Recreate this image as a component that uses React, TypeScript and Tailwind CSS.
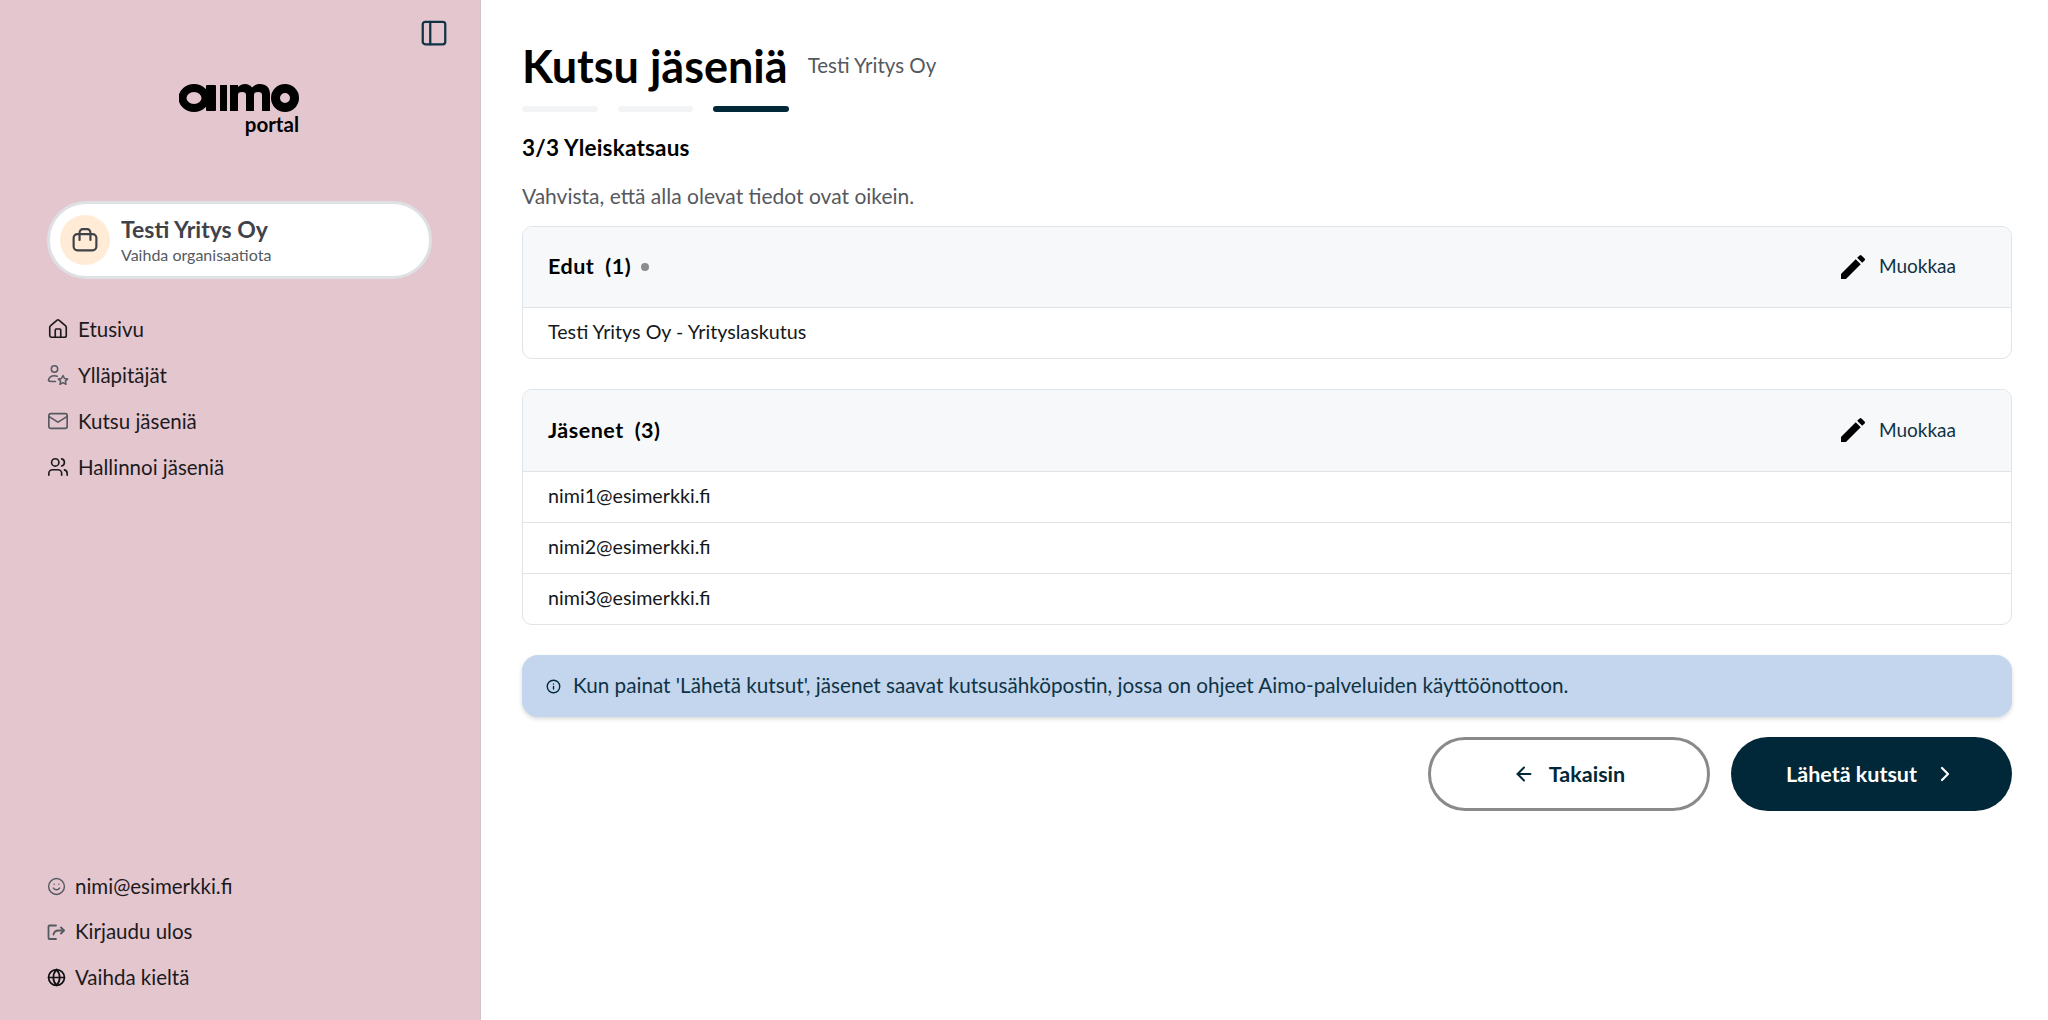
import { ArrowLeft, ChevronRight, Globe, House, Info, Mail, PanelLeft, Smile, Users } from "lucide-react";
import type { ReactNode } from "react";
import { MdEdit } from "react-icons/md";

function AimoLogo() {
  return (
    <svg width="120" height="28" viewBox="0 0 120 28" className="block">
      {/* a */}
      <ellipse cx="15" cy="14" rx="11.500" ry="10" fill="none" stroke="#000" strokeWidth="8" />
      <rect x="27" y="1" width="10" height="26" rx="1" />
      {/* i */}
      <rect x="41" y="1" width="7" height="26" />
      {/* m */}
      <path d="M51 27V1h8v2C61 1 63.500 0 66 0c3 0 5.500 1.200 7 3.500C75 1.200 77.500 0 81 0c6 0 10 3.500 10 10v17h-8V11c0-2-1-3-4-3s-4 1-4 3v16h-8V11c0-2-1-3-4-3s-4 1-4 3v16z" />
      {/* o */}
      <circle cx="106" cy="14" r="9.500" fill="none" stroke="#000" strokeWidth="9" />
    </svg>
  );
}

function BagIcon() {
  return (
    <svg width="26" height="26" viewBox="0 0 24 24" fill="none" stroke="#3f4349" strokeWidth="2" strokeLinecap="round">
      <rect x="1.500" y="6.500" width="21" height="15" rx="3.500" />
      <path d="M7 12V5.500C7 3.500 8.300 2 10 2h4c1.700 0 3 1.500 3 3.500V12" />
    </svg>
  );
}

function AdminIcon() {
  return (
    <svg width="22" height="22" viewBox="0 0 22 22" fill="none" stroke="#555a60" strokeWidth="1.500" strokeLinecap="round" strokeLinejoin="round">
      <circle cx="7.500" cy="5" r="3.200" />
      <path d="M1.500 16.500c0-2.800 2.500-4.700 6-4.700 1 0 1.900.1 2.700.4" />
      <path d="M1.500 16.500c.5.700 1.500 1 3 1h4" />
      <path d="m16 11.500 1.500 3 3.200.4-2.300 2.200.6 3.200-3-1.600-3 1.600.6-3.200-2.300-2.200 3.200-.4z" />
    </svg>
  );
}

function LogoutIcon() {
  return (
    <svg width="18" height="18" viewBox="0 0 18 18" fill="none" stroke="#555a60" strokeWidth="1.800" strokeLinecap="round" strokeLinejoin="round">
      <path d="M9 2.500H2.500a1 1 0 0 0-1 1V15a1 1 0 0 0 1 1H9" />
      <path d="M6.500 11.500c.5-2.500 2.500-4 5-4h5" />
      <path d="m14 4.500 3 3-3 3" />
    </svg>
  );
}

function NavItem({ icon, label }: { icon: ReactNode; label: string }) {
  return (
    <div className="flex h-[46px] items-center">
      <span className="flex w-[31px] shrink-0 items-center">{icon}</span>
      <span className="text-[20.500px] text-[#1c1a1c]">{label}</span>
    </div>
  );
}

function FooterItem({ icon, label }: { icon: ReactNode; label: string }) {
  return (
    <div className="flex h-[45.500px] items-center">
      <span className="flex w-[28px] shrink-0 items-center">{icon}</span>
      <span className="text-[20.500px] text-[#1c1a1c]">{label}</span>
    </div>
  );
}

function Sidebar() {
  return (
    <aside className="flex h-[1020px] w-[481px] shrink-0 flex-col border-r border-[#d5c3c9] bg-[#e4c6cf] pl-[47px]">
      <div className="flex justify-end pr-[31px] pt-[18px]">
        <PanelLeft size={30} strokeWidth={1.800} color="#0f3344" />
      </div>
      <div className="mt-[36px] flex w-[252px] flex-col items-end">
        <AimoLogo />
        <span className="mt-[2px] text-[20.500px] leading-[20px] font-bold text-black">portal</span>
      </div>
      <div className="mt-[67px] flex h-[78px] w-[385px] items-center gap-[11px] rounded-full border-[3px] border-[#dfe0e4] bg-white pl-[10px]">
        <span className="flex size-[50px] items-center justify-center rounded-full bg-[#ffebd6]">
          <BagIcon />
        </span>
        <div className="flex flex-col">
          <span className="text-[23px] leading-[26px] font-bold text-[#3f4349]">Testi Yritys Oy</span>
          <span className="mt-[3px] text-[16px] leading-[20px] text-[#555a60]">Vaihda organisaatiota</span>
        </div>
      </div>
      <nav className="mt-[27px] flex flex-col">
        <NavItem icon={<House size={22} strokeWidth={1.800} color="#1c1a1c" />} label="Etusivu" />
        <NavItem icon={<AdminIcon />} label="Ylläpitäjät" />
        <NavItem icon={<Mail size={22} strokeWidth={1.800} color="#555a60" />} label="Kutsu jäseniä" />
        <NavItem icon={<Users size={22} strokeWidth={1.800} color="#1c1a1c" />} label="Hallinnoi jäseniä" />
      </nav>
      <div className="mt-auto flex flex-col pb-[20px]">
        <FooterItem icon={<Smile size={19} strokeWidth={1.800} color="#555a60" />} label="nimi@esimerkki.fi" />
        <FooterItem icon={<LogoutIcon />} label="Kirjaudu ulos" />
        <FooterItem icon={<Globe size={19} strokeWidth={2.200} color="#111" />} label="Vaihda kieltä" />
      </div>
    </aside>
  );
}

function CardHeader({ title, count, dot, height }: { title: string; count: string; dot?: boolean; height: string }) {
  return (
    <div className={`flex items-center justify-between border-b border-[#dfe4e8] bg-[#f6f8fa] pb-[1px] pl-[25px] pr-[55px] ${height}`}>
      <div className="flex items-center text-[21.500px] font-bold tracking-[0.5px] text-black">
        <span>{title}</span>
        <span className="ml-[11px]">{count}</span>
        {dot && <span className="ml-[10px] size-[8px] rounded-full bg-[#8a8d90]" />}
      </div>
      <div className="flex items-center gap-[10px]">
        <MdEdit size={32} color="#000" />
        <span className="text-[19px] text-[#0f3344]">Muokkaa</span>
      </div>
    </div>
  );
}

function Row({ text, height, last }: { text: string; height: string; last?: boolean }) {
  return (
    <div className={`flex items-center pb-[2px] pl-[25px] text-[19.700px] text-[#15181a] ${height} ${last ? "" : "border-b border-[#dfe4e8]"}`}>
      {text}
    </div>
  );
}

export default function App() {
  return (
    <div className="flex h-[1020px] w-[2048px] overflow-hidden bg-white font-['Lato',sans-serif]">
      <Sidebar />
      <main className="flex flex-1 flex-col pl-[41px] pr-[36px]">
        <div className="flex items-center gap-[20px] pt-[36px]">
          <h1 className="text-[45px] leading-[60px] font-bold text-black">Kutsu jäseniä</h1>
          <span className="-translate-y-[1px] text-[20.500px] text-[#55595e]">Testi Yritys Oy</span>
        </div>
        <div className="mt-[10px] flex gap-[20px]">
          <span className="h-[6px] w-[76px] rounded-full bg-[#f3f4f5]" />
          <span className="h-[6px] w-[75px] rounded-full bg-[#f3f4f5]" />
          <span className="h-[6px] w-[76px] rounded-full bg-[#002838]" />
        </div>
        <p className="mt-[22px] text-[22.500px] leading-[28px] font-bold tracking-[0.2px] text-black">3/3 Yleiskatsaus</p>
        <p className="mt-[20px] text-[21px] leading-[28px] text-[#55595e]">Vahvista, että alla olevat tiedot ovat oikein.</p>
        <section className="mt-[16px] overflow-hidden rounded-[10px] border border-[#dfe4e8]">
          <CardHeader title="Edut" count="(1)" dot height="h-[81px]" />
          <Row text="Testi Yritys Oy - Yrityslaskutus" height="h-[50px]" last />
        </section>
        <section className="mt-[30px] overflow-hidden rounded-[10px] border border-[#dfe4e8]">
          <CardHeader title="Jäsenet" count="(3)" height="h-[82px]" />
          <Row text="nimi1@esimerkki.fi" height="h-[51px]" />
          <Row text="nimi2@esimerkki.fi" height="h-[51px]" />
          <Row text="nimi3@esimerkki.fi" height="h-[50px]" last />
        </section>
        <div className="mt-[30px] flex h-[62px] items-center gap-[12px] rounded-[16px] bg-[#c3d6ee] pl-[24px] shadow-[0_2px_4px_rgba(0,0,0,0.15)]">
          <Info size={15} strokeWidth={2.200} color="#002838" />
          <span className="text-[20.700px] text-[#0f3344]">Kun painat 'Lähetä kutsut', jäsenet saavat kutsusähköpostin, jossa on ohjeet Aimo-palveluiden käyttöönottoon.</span>
        </div>
        <div className="mt-[20px] flex justify-end gap-[21px]">
          <button className="flex h-[74px] w-[282px] items-center justify-center gap-[14px] rounded-full border-[3px] border-[#8a8a8a] bg-white text-[21.500px] font-bold text-[#002838]">
            <ArrowLeft size={22} strokeWidth={2.200} />
            Takaisin
          </button>
          <button className="flex h-[74px] w-[281px] items-center justify-center gap-[16px] rounded-full bg-[#002838] text-[21.500px] font-bold text-white">
            Lähetä kutsut
            <ChevronRight size={24} strokeWidth={2.200} />
          </button>
        </div>
      </main>
    </div>
  );
}
